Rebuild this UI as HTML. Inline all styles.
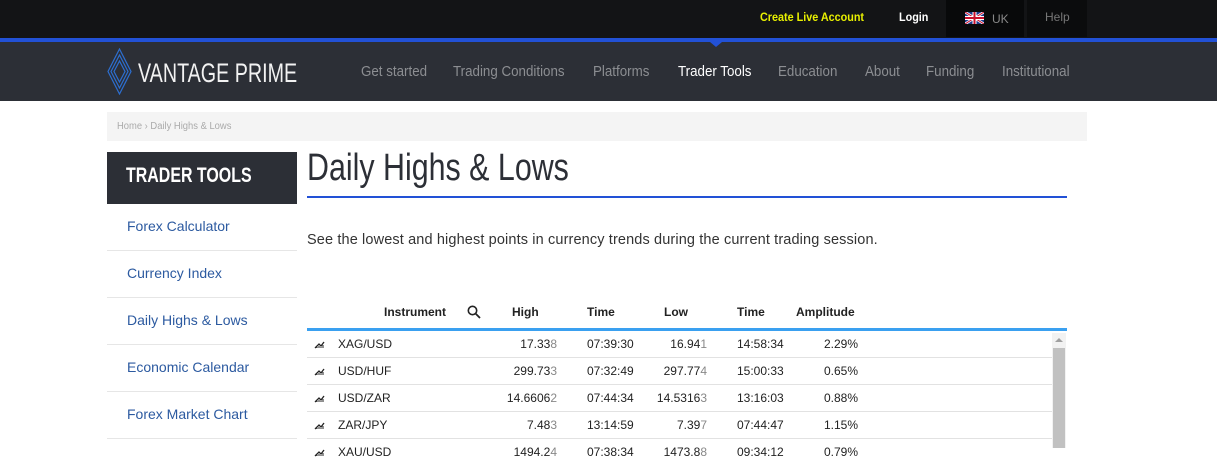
<!DOCTYPE html><html><head><style>
*{margin:0;padding:0;box-sizing:border-box}
body{width:1217px;height:448px;overflow:hidden;background:#fff;font-family:"Liberation Sans",sans-serif;position:relative}
.a{position:absolute;white-space:nowrap}
.sx{transform-origin:0 0}
.top{position:absolute;left:0;top:0;width:1217px;height:38px;background:#131416}
.blue{position:absolute;left:0;top:38px;width:1217px;height:4px;background:#2251d6}
.nav{position:absolute;left:0;top:42px;width:1217px;height:59px;background:#2c2f36}
.n{font-size:15px;color:#8c8e92;top:63px;transform:scaleX(.89);transform-origin:0 0}
.side{font-size:14px;color:#2c5aa0;left:127px}
.sep{position:absolute;left:107px;width:190px;height:1px;background:#e6e6e6}
.th{font-size:12px;font-weight:bold;color:#222;top:305px}
.td{font-size:12px;color:#222}
.r{text-align:right}
.g{color:#888}
.rl{position:absolute;left:307px;width:745px;height:1px;background:#e2e2e2}
</style></head><body>
<div class="top"></div>
<div class="a" style="left:946px;top:0;width:78px;height:37px;background:#08090a"></div>
<div class="a" style="left:1027px;top:0;width:60px;height:37px;background:#0b0c0d"></div>
<div class="a sx" style="left:760px;top:10px;font-size:12px;font-weight:bold;color:#e8f000;transform:scaleX(.9)">Create Live Account</div>
<div class="a sx" style="left:899px;top:10px;font-size:12px;font-weight:bold;color:#fff;transform:scaleX(.9)">Login</div>
<svg class="a" style="left:965px;top:12px" width="19" height="12" viewBox="0 0 19 12"><rect width="19" height="12" fill="#1a3a8c"/><path d="M0 0L19 12M19 0L0 12" stroke="#fff" stroke-width="2.5"/><path d="M0 0L19 12M19 0L0 12" stroke="#c8102e" stroke-width="1"/><path d="M9.5 0V12M0 6H19" stroke="#fff" stroke-width="4"/><path d="M9.5 0V12M0 6H19" stroke="#c8102e" stroke-width="2"/></svg>
<div class="a" style="left:992px;top:12px;font-size:12px;color:#888">UK</div>
<div class="a" style="left:1045px;top:10px;font-size:12px;color:#777">Help</div>
<div class="blue"></div>
<div class="nav"></div>
<div class="a" style="left:710px;top:42px;width:0;height:0;border-left:6px solid transparent;border-right:6px solid transparent;border-top:5px solid #2251d6"></div>
<svg class="a" style="left:107px;top:48px" width="25" height="47" viewBox="0 0 25 47"><g fill="none" stroke="#2d6fd0" stroke-width="1.2"><path d="M12.5 1L24 23.5L12.5 46L1 23.5Z"/><path d="M12.5 7L21 23.5L12.5 40L4 23.5Z"/><path d="M12.5 13L18 23.5L12.5 34L7 23.5Z"/></g></svg>
<div class="a sx" style="left:138px;top:58px;font-size:27px;color:#f2f2f2;transform:scaleX(.73)">VANTAGE PRIME</div>
<div class="a n" style="left:361px">Get started</div>
<div class="a n" style="left:453px">Trading Conditions</div>
<div class="a n" style="left:593px">Platforms</div>
<div class="a n" style="left:678px;color:#fff">Trader Tools</div>
<div class="a n" style="left:778px">Education</div>
<div class="a n" style="left:865px">About</div>
<div class="a n" style="left:926px">Funding</div>
<div class="a n" style="left:1002px">Institutional</div>
<div class="a" style="left:107px;top:112px;width:980px;height:29px;background:#f4f4f4"></div>
<div class="a sx" style="left:117px;top:121px;font-size:10px;color:#aaa;transform:scaleX(.94)">Home › Daily Highs &amp; Lows</div>
<div class="a" style="left:107px;top:152px;width:190px;height:52px;background:#2c2f36"></div>
<div class="a sx" style="left:126px;top:164px;font-size:21px;font-weight:bold;color:#fff;transform:scaleX(.76)">TRADER TOOLS</div>
<div class="a side" style="top:218px">Forex Calculator</div>
<div class="sep" style="top:250px"></div>
<div class="a side" style="top:265px">Currency Index</div>
<div class="sep" style="top:297px"></div>
<div class="a side" style="top:312px">Daily Highs &amp; Lows</div>
<div class="sep" style="top:344px"></div>
<div class="a side" style="top:359px">Economic Calendar</div>
<div class="sep" style="top:391px"></div>
<div class="a side" style="top:406px">Forex Market Chart</div>
<div class="sep" style="top:438px"></div>
<div class="a sx" style="left:307px;top:147px;font-size:38px;color:#2c2f36;transform:scaleX(.80)">Daily Highs &amp; Lows</div>
<div class="a" style="left:307px;top:196px;width:760px;height:2px;background:#2251d6"></div>
<div class="a" style="left:307px;top:232px;font-size:14.5px;color:#333;letter-spacing:.13px">See the lowest and highest points in currency trends during the current trading session.</div>
<div class="a th" style="left:384px">Instrument</div>
<svg class="a" style="left:467px;top:305px" width="14" height="14" viewBox="0 0 14 14"><circle cx="5.5" cy="5.5" r="4.2" fill="none" stroke="#222" stroke-width="1.6"/><path d="M8.5 8.5L13 13" stroke="#222" stroke-width="1.8"/></svg>
<div class="a th" style="left:512px">High</div>
<div class="a th" style="left:587px">Time</div>
<div class="a th" style="left:664px">Low</div>
<div class="a th" style="left:737px">Time</div>
<div class="a th" style="left:796px">Amplitude</div>
<div class="a" style="left:307px;top:328px;width:760px;height:3px;background:#3aa0f0"></div>
<div class="a" style="left:1052px;top:333px;width:14px;height:115px;background:#f2f2f2"></div>
<div class="a" style="left:1053px;top:348px;width:12px;height:100px;background:#c1c1c1"></div>
<div class="a" style="left:1055px;top:338px;border-left:4px solid transparent;border-right:4px solid transparent;border-bottom:4px solid #a0a0a0"></div>
<div class="rl" style="top:357px"></div><div class="rl" style="top:384px"></div><div class="rl" style="top:411px"></div><div class="rl" style="top:438px"></div>
<div id="rows"></div>
<script>
var d=[["XAG/USD","17.33","8","07:39:30","16.94","1","14:58:34","2.29%"],["USD/HUF","299.73","3","07:32:49","297.77","4","15:00:33","0.65%"],["USD/ZAR","14.6606","2","07:44:34","14.5316","3","13:16:03","0.88%"],["ZAR/JPY","7.48","3","13:14:59","7.39","7","07:44:47","1.15%"],["XAU/USD","1494.2","4","07:38:34","1473.8","8","09:34:12","0.79%"]];
var h="";d.forEach(function(r,i){var t=337+i*27;
h+='<svg class="a" style="left:314px;top:'+(t+3)+'px" width="11" height="9" viewBox="0 0 11 9"><path d="M1 8L5 4L7 6L10 2" fill="none" stroke="#222" stroke-width="1.3"/><path d="M3 8V7M5 8V6M7 8V7M9 8V5" stroke="#222"/></svg>';
h+='<div class="a td" style="left:338px;top:'+t+'px">'+r[0]+'</div>';
h+='<div class="a td r" style="right:'+(1217-557)+'px;top:'+t+'px">'+r[1]+'<span class="g">'+r[2]+'</span></div>';
h+='<div class="a td" style="left:587px;top:'+t+'px">'+r[3]+'</div>';
h+='<div class="a td r" style="right:'+(1217-707)+'px;top:'+t+'px">'+r[4]+'<span class="g">'+r[5]+'</span></div>';
h+='<div class="a td" style="left:737px;top:'+t+'px">'+r[6]+'</div>';
h+='<div class="a td" style="left:824px;top:'+t+'px">'+r[7]+'</div>';});
document.getElementById("rows").innerHTML=h;
</script>
</body></html>
